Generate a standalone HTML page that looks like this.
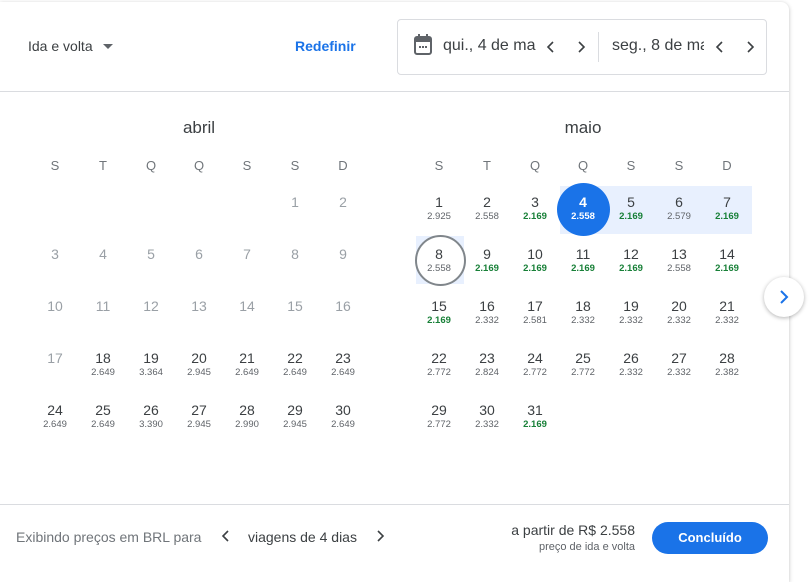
<!DOCTYPE html>
<html><head><meta charset="utf-8"><style>
*{margin:0;padding:0;box-sizing:border-box}
body{width:811px;height:570px;background:#fff;font-family:"Liberation Sans",sans-serif;position:relative;overflow:hidden;color:#3c4043}
.panel{position:absolute;left:0;top:2px;width:789px;height:580px;background:#fff;border-radius:0 8px 0 0;box-shadow:0 1px 4px rgba(0,0,0,.25)}
.a{position:absolute}
.hd{font-size:13px;color:#70757a;width:48px;text-align:center}
.c{position:absolute;width:48px;height:52px;text-align:center}
.n{font-size:14px;color:#3c4043;margin-top:11px;line-height:16px}
.g .n{color:#9aa0a6}
.p{font-size:9.5px;color:#5f6368;line-height:12px;margin-top:1px}
.p.gr{color:#188038;font-weight:bold}
.ttl{font-size:17px;color:#3c4043;width:100px;text-align:center}
</style></head><body>
<div class="panel"></div>
<div class="a" style="left:28px;top:38px;font-size:14px;color:#3c4043">Ida e volta</div>
<svg class="a" style="left:103px;top:44px" width="10" height="6"><path d="M0 0h10L5 5z" fill="#5f6368"/></svg>
<div class="a" style="left:295px;top:38px;font-size:14px;color:#1a73e8;font-weight:bold">Redefinir</div>
<div class="a" style="left:397px;top:19px;width:370px;height:56px;border:1px solid #dadce0;border-radius:4px"></div>
<div class="a" style="left:598px;top:32px;width:1px;height:30px;background:#dadce0"></div>
<svg class="a" style="left:413px;top:34px" width="20" height="22" viewBox="0 0 20 22"><rect x="2" y="3" width="16" height="17" rx="2" fill="none" stroke="#5f6368" stroke-width="2"/><rect x="2" y="3" width="16" height="5" fill="#5f6368"/><rect x="5" y="0" width="2" height="5" fill="#5f6368"/><rect x="13" y="0" width="2" height="5" fill="#5f6368"/><rect x="6" y="12" width="2" height="2" fill="#5f6368"/><rect x="9" y="12" width="2" height="2" fill="#5f6368"/><rect x="12" y="12" width="2" height="2" fill="#5f6368"/></svg>
<div class="a" style="left:443px;top:37px;font-size:16px;width:93px;overflow:hidden;white-space:nowrap">qui., 4 de maio</div>
<svg class="a" style="left:546px;top:40px" width="10" height="14"><path d="M7 2L2 7l5 5" fill="none" stroke="#3c4043" stroke-width="1.6"/></svg>
<svg class="a" style="left:576px;top:40px" width="10" height="14"><path d="M3 2l5 5-5 5" fill="none" stroke="#3c4043" stroke-width="1.6"/></svg>
<div class="a" style="left:612px;top:37px;font-size:16px;width:92px;overflow:hidden;white-space:nowrap">seg., 8 de maio</div>
<svg class="a" style="left:715px;top:40px" width="10" height="14"><path d="M7 2L2 7l5 5" fill="none" stroke="#3c4043" stroke-width="1.6"/></svg>
<svg class="a" style="left:745px;top:40px" width="10" height="14"><path d="M3 2l5 5-5 5" fill="none" stroke="#3c4043" stroke-width="1.6"/></svg>
<div class="a" style="left:0;top:91px;width:789px;height:1px;background:#dadce0"></div>
<div class="a ttl" style="left:149px;top:118px">abril</div>
<div class="a ttl" style="left:533px;top:118px">maio</div>
<div class="a" style="left:560px;top:186px;width:192px;height:48px;background:#e8f0fe"></div>
<div class="a" style="left:416px;top:236px;width:48px;height:48px;background:#e8f0fe"></div>
<div class="a" style="left:557px;top:183px;width:53px;height:53px;border-radius:50%;background:#1a73e8"></div>
<div class="a" style="left:415px;top:235px;width:51px;height:51px;border-radius:50%;border:2px solid #80868b;background:#fff"></div>
<div id="cal"></div>
<div class="a" style="left:764px;top:277px;width:40px;height:40px;border-radius:50%;background:#fff;box-shadow:0 1px 4px rgba(0,0,0,.3)"></div>
<svg class="a" style="left:776px;top:289px" width="16" height="16" viewBox="0 0 16 16"><path d="M5 2l6 6-6 6" fill="none" stroke="#1a73e8" stroke-width="2"/></svg>
<div class="a" style="left:0;top:504px;width:789px;height:1px;background:#dadce0"></div>
<div class="a" style="left:16px;top:529px;font-size:14px;color:#70757a">Exibindo preços em BRL para</div>
<svg class="a" style="left:221px;top:529px" width="10" height="14"><path d="M7 2L2 7l5 5" fill="none" stroke="#3c4043" stroke-width="1.6"/></svg>
<div class="a" style="left:248px;top:529px;font-size:14px;color:#3c4043">viagens de 4 dias</div>
<svg class="a" style="left:375px;top:529px" width="10" height="14"><path d="M3 2l5 5-5 5" fill="none" stroke="#3c4043" stroke-width="1.6"/></svg>
<div class="a" style="left:480px;top:522px;width:155px;text-align:right;font-size:14px">a partir de R$ 2.558</div>
<div class="a" style="left:480px;top:541px;width:155px;text-align:right;font-size:11px;color:#5f6368">preço de ida e volta</div>
<div class="a" style="left:652px;top:522px;width:116px;height:32px;border-radius:16px;background:#1a73e8;color:#fff;font-weight:bold;font-size:13px;text-align:center;line-height:32px">Concluído</div>
<script>
var h='';var D=['S','T','Q','Q','S','S','D'];
[31,415].forEach(function(x0){D.forEach(function(d,i){h+='<div class="a hd" style="left:'+(x0+i*48)+'px;top:158px">'+d+'</div>';});});
function cell(x0,r,c,n,p,g,sel){var s='<div class="c'+(g?' g':'')+'" style="left:'+(x0+c*48)+'px;top:'+(183+r*52)+'px">';
s+='<div class="n"'+(sel?' style="color:#fff;font-weight:bold"':'')+'>'+n+'</div>';
if(p){var gr=p[0]=='*';p=p.replace('*','');s+='<div class="p'+(gr?' gr':'')+'"'+(sel?' style="color:#fff;font-weight:bold"':'')+'>'+p+'</div>';}
return s+'</div>';}
var ap=[[],[],[],['','2.649','3.364','2.945','2.649','2.649','2.649'],['2.649','2.649','3.390','2.945','2.990','2.945','2.649']];
for(var d=1;d<=30;d++){var idx=d+4;var r=Math.floor(idx/7),c=idx%7;var p=d>=18?ap[r][c]:'';h+=cell(31,r,c,d,p,d<18,false);}
var mp=['2.925','2.558','*2.169','2.558','*2.169','2.579','*2.169','2.558','*2.169','*2.169','*2.169','*2.169','2.558','*2.169','*2.169','2.332','2.581','2.332','2.332','2.332','2.332','2.772','2.824','2.772','2.772','2.332','2.332','2.382','2.772','2.332','*2.169'];
for(var d=1;d<=31;d++){var idx=d-1;h+=cell(415,Math.floor(idx/7),idx%7,d,mp[idx],false,d==4);}
document.getElementById('cal').innerHTML=h;
</script>
</body></html>
